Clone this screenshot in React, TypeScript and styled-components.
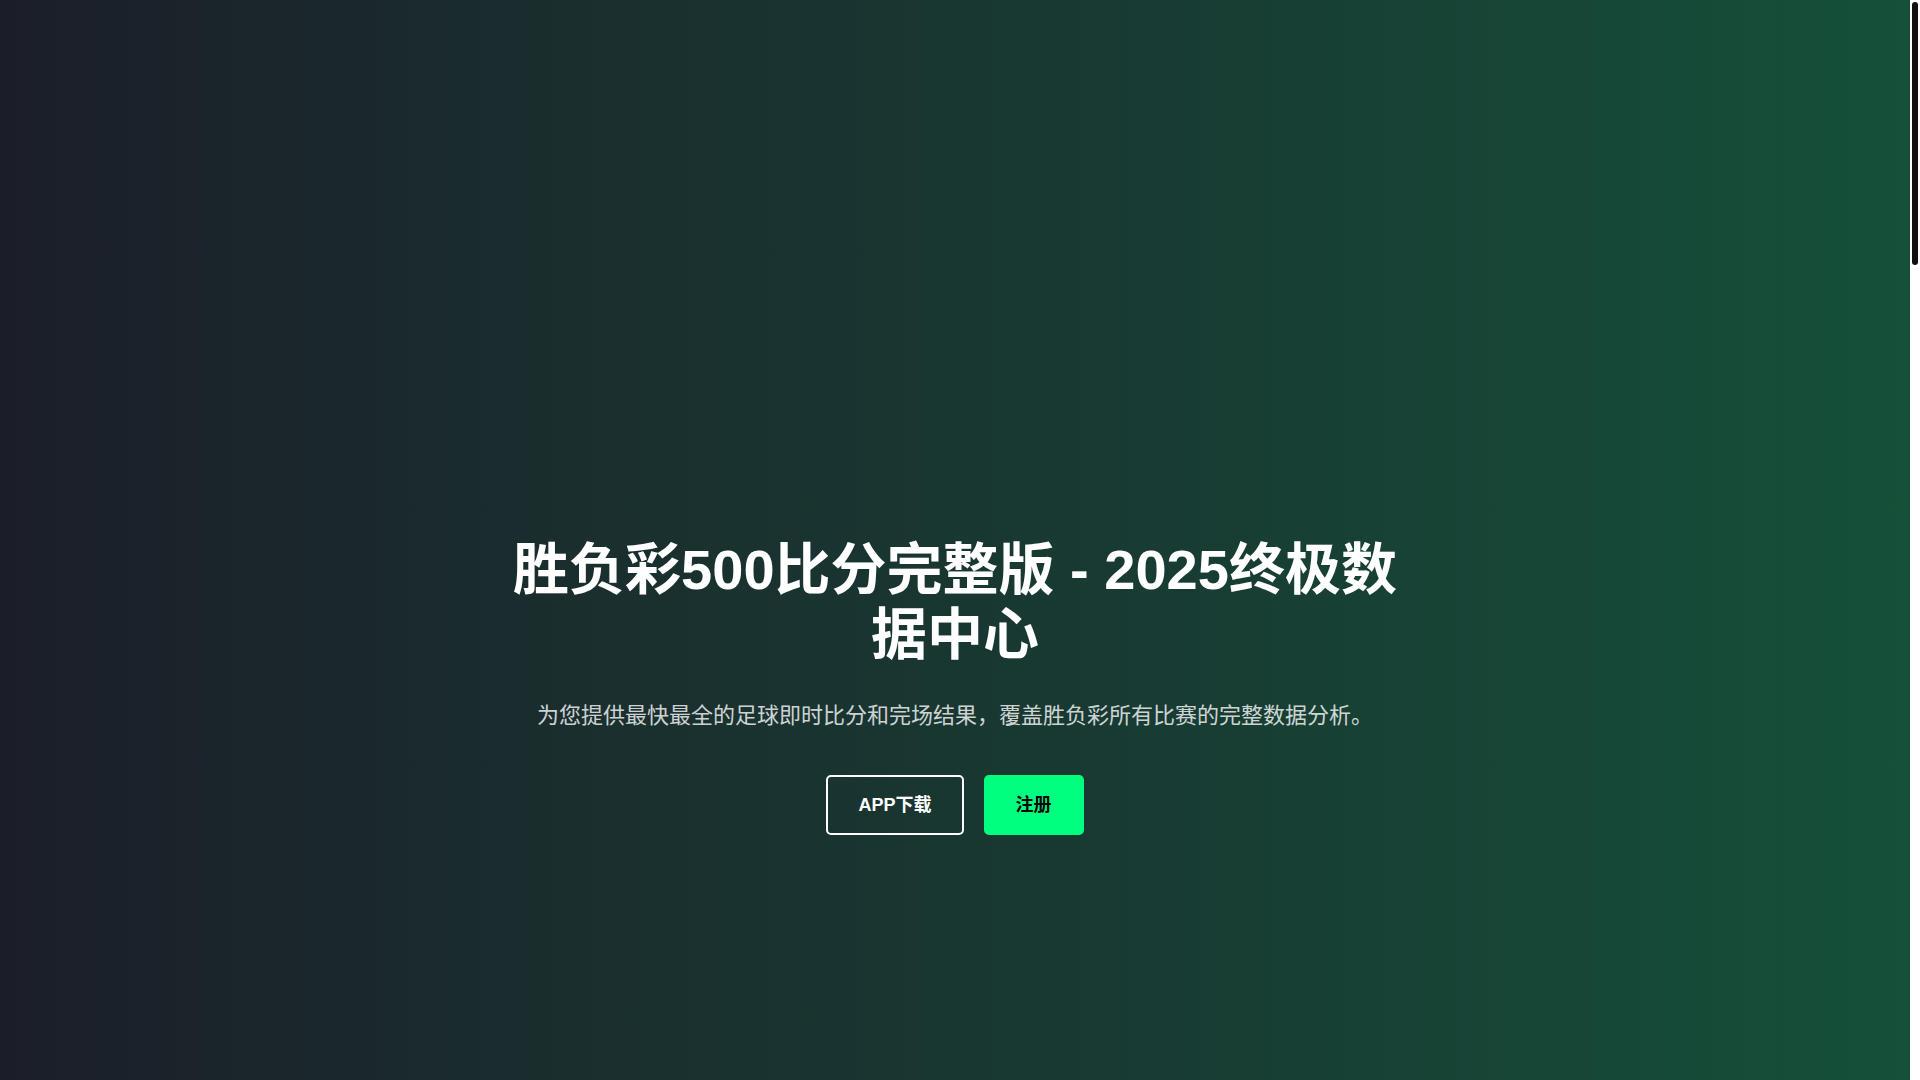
import React from 'react';
import styled, { createGlobalStyle } from 'styled-components';

const GlobalStyle = createGlobalStyle`
  html, body {
    margin: 0;
    padding: 0;
  }
  body {
    background: #ffffff;
    font-family: "Liberation Sans", "Noto Sans CJK SC", sans-serif;
    color: #ffffff;
  }
  * {
    box-sizing: border-box;
  }
`;

const Page = styled.div`
  margin-right: 10px;
`;

const ScrollTrack = styled.div`
  position: fixed;
  top: 0;
  right: 0;
  width: 10px;
  height: 100vh;
  background: #ffffff;
  padding: 2px;
`;

const ScrollThumb = styled.div`
  height: 263px;
  border-radius: 3px;
  background: #111111;
`;

const Hero = styled.section`
  min-height: 100vh;
  display: flex;
  align-items: center;
  justify-content: center;
  padding: 293px 20px 0;
  background: linear-gradient(90deg, #1b1e29 0%, #1a2e2e 30%, #183b33 60%, #155039 100%);
`;

const Inner = styled.div`
  max-width: 900px;
  width: 100%;
  text-align: center;
`;

const Title = styled.h1`
  margin: 0 0 30px;
  font-size: 56px;
  line-height: 1.16;
  font-weight: 700;
  color: #ffffff;
`;

const Lead = styled.p`
  margin: 0 0 42px;
  font-size: 22px;
  line-height: 1.6;
  color: rgba(255, 255, 255, 0.8);
`;

const Actions = styled.div`
  display: flex;
  justify-content: center;
  gap: 20px;
`;

const Button = styled.a<{ $primary?: boolean }>`
  display: inline-block;
  padding: 16px 30px;
  font-size: 18px;
  line-height: 24px;
  font-weight: 700;
  text-decoration: none;
  border-radius: 5px;
  border: 2px solid ${(p) => (p.$primary ? '#00ff7f' : '#ffffff')};
  background: ${(p) => (p.$primary ? '#00ff7f' : 'transparent')};
  color: ${(p) => (p.$primary ? '#000000' : '#ffffff')};
  cursor: pointer;
`;

export default function App() {
  return (
    <>
      <GlobalStyle />
      <Page>
        <Hero>
          <Inner>
            <Title>胜负彩500比分完整版 - 2025终极数据中心</Title>
            <Lead>为您提供最快最全的足球即时比分和完场结果，覆盖胜负彩所有比赛的完整数据分析。</Lead>
            <Actions>
              <Button href="#">APP下载</Button>
              <Button href="#" $primary>
                注册
              </Button>
            </Actions>
          </Inner>
        </Hero>
      </Page>
      <ScrollTrack>
        <ScrollThumb />
      </ScrollTrack>
    </>
  );
}
